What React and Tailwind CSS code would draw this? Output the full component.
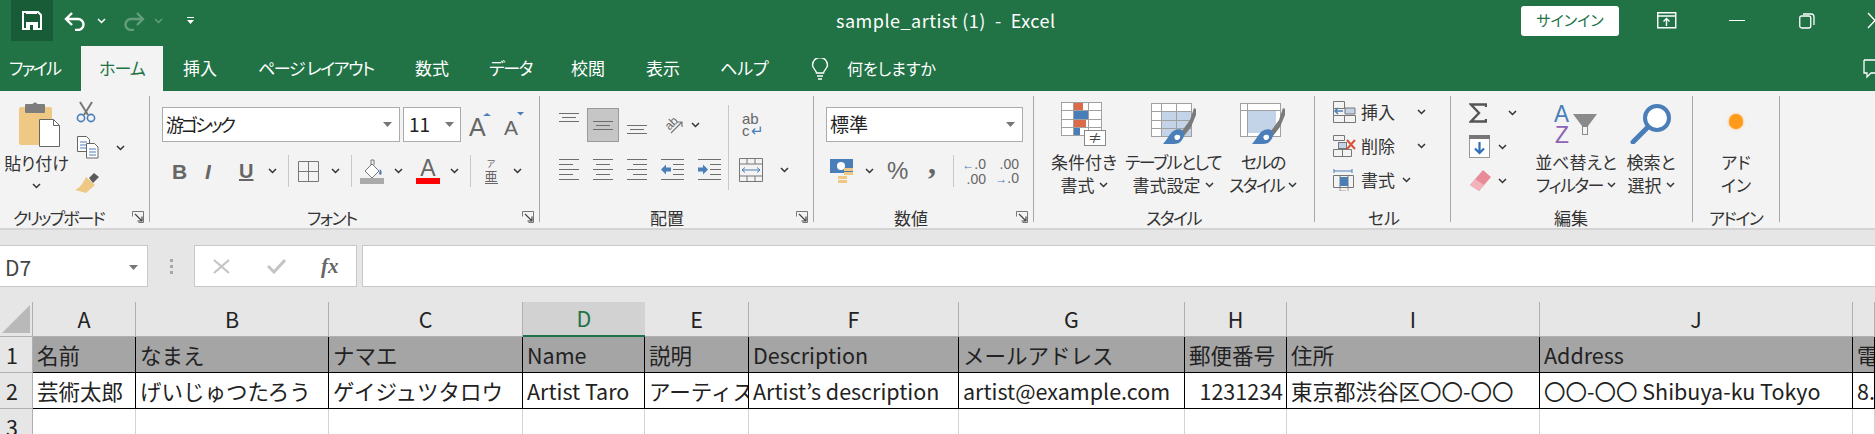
import React from "react";

const Chev = ({ className = "", color = "#333" }) => (
  <svg width="9" height="6" viewBox="0 0 9 6" className={`shrink-0 ${className}`}>
    <path d="M1 1l3.5 3.5L8 1" fill="none" stroke={color} strokeWidth="1.5" />
  </svg>
);

const Arrow = ({ className = "" }) => (
  <svg width="9" height="5" viewBox="0 0 9 5" className={`shrink-0 ${className}`}>
    <path d="M0 0h9L4.5 5z" fill="#777" />
  </svg>
);

const Sep = ({ className = "" }) => <div className={`w-px h-[32px] bg-[#c8c8c8] shrink-0 ${className}`} />;

const Launcher = ({ className = "" }) => (
  <svg width="12" height="12" viewBox="0 0 12 12" className={`shrink-0 ${className}`}>
    <path d="M.5 5.5V.5h11v11h-5" fill="none" stroke="#777" />
    <path d="M3 3l7 7M10 5.5V10H5.5" fill="none" stroke="#444" strokeWidth="1.2" />
  </svg>
);

const GroupLabel = ({ children, className = "", launcher = false }) => (
  <div className="flex items-center h-[16px] mb-[-3px] text-[17px] leading-none text-[#333] whitespace-nowrap [font-feature-settings:'palt']">
    <span className={className}>{children}</span>
    {launcher && <Launcher className="ml-auto mr-[5px]" />}
  </div>
);

const Lines = ({ rows, w = 20, h = 10, color = "#6e6e6e", className = "" }) => (
  <svg width={w} height={h} viewBox={`0 0 ${w} ${h}`} className={`shrink-0 ${className}`}>
    {rows.map((r, i) => (
      <rect key={i} x={r[0]} y={r[2]} width={r[1] - r[0]} height="1" fill={color} />
    ))}
  </svg>
);

const TopLines = [[0, 20, 0], [3, 17, 4], [0, 20, 8]];
const LeftLines = [[0, 20, 0], [0, 14, 5], [0, 20, 10], [0, 14, 15], [0, 20, 20]];
const CenterLines = [[0, 20, 0], [3, 17, 5], [0, 20, 10], [3, 17, 15], [0, 20, 20]];
const RightLines = [[0, 20, 0], [6, 20, 5], [0, 20, 10], [6, 20, 15], [0, 20, 20]];

const Indent = ({ flip }) => (
  <svg width="23" height="21" viewBox="0 0 23 21" className="shrink-0">
    <g fill="#6e6e6e">
      <rect x="0" y="0" width="23" height="1" />
      <rect x="0" y="20" width="23" height="1" />
      <rect x="12" y="5" width="11" height="1" />
      <rect x="12" y="10" width="11" height="1" />
      <rect x="12" y="15" width="11" height="1" />
    </g>
    {flip ? (
      <path d="M0 10.5l5-5v3h5v4H5v3z" fill="#4a7eb8" />
    ) : (
      <path d="M10 10.5l-5-5v3H0v4h5v3z" fill="#4a7eb8" />
    )}
  </svg>
);

const BrushIcon = () => (
  <>
    <path d="M30 28l8-11 4-12 2 1v6l-5 12-7 9z" fill="#7a7a7a" />
    <path d="M22 41h-11c3-3 6-9 9-12 3-3 9-4 11-1 2 3 1 6-1 9-2 3-5 4-8 4z" fill="#4a7eb8" />
    <path d="M24 32c2-1 5 0 4 3-1 2-4 3-5 1-1-2-1-3 1-4z" fill="#fff" />
  </>
);

const GridLines = ({ x, y, w, h, cols, rows }) => (
  <g stroke="#a0a0a0" strokeWidth="1" fill="none">
    <rect x={x + 0.5} y={y + 0.5} width={w} height={h} />
    {cols.map((c) => <path key={c} d={`M${x + c + 0.5} ${y}v${h}`} />)}
    {rows.map((r) => <path key={r} d={`M${x} ${y + r + 0.5}h${w}`} />)}
  </g>
);

const CondIcon = () => (
  <svg width="46" height="45" viewBox="0 0 46 45">
    <rect x="0" y="0" width="40" height="33" fill="#fff" />
    <rect x="12" y="1" width="10" height="7" fill="#dc6a4a" />
    <rect x="12" y="9" width="15" height="8" fill="#4a7eb8" />
    <rect x="12" y="18" width="13" height="7" fill="#dc6a4a" />
    <rect x="12" y="26" width="7" height="7" fill="#4a7eb8" />
    <GridLines x={0} y={0} w={40} h={33} cols={[12, 27]} rows={[8, 17, 25]} />
    <rect x="23.5" y="28.5" width="21" height="15" fill="#fff" stroke="#8a8a8a" />
    <text x="34" y="41" textAnchor="middle" fontSize="14" fill="#444">≠</text>
  </svg>
);

const TableIcon = () => (
  <svg width="45" height="42" viewBox="0 0 45 42">
    <rect x="0" y="0" width="40" height="33" fill="#fff" />
    <rect x="10" y="8" width="30" height="25" fill="#c3d4e8" />
    <GridLines x={0} y={0} w={40} h={33} cols={[10, 25]} rows={[8, 17, 25]} />
    <g transform="translate(1 0)"><BrushIcon /></g>
  </svg>
);

const CellStyleIcon = () => (
  <svg width="46" height="42" viewBox="0 0 46 42">
    <rect x="0.5" y="0.5" width="40" height="33" fill="#fff" stroke="#a0a0a0" />
    <path d="M0 7.5h40M7.5 0v33" stroke="#a0a0a0" />
    <rect x="8" y="8" width="28" height="22" fill="#c3d4e8" />
    <g transform="translate(1 0)"><BrushIcon /></g>
  </svg>
);

const SortIcon = () => (
  <svg width="44" height="40" viewBox="0 0 44 40">
    <text x="0" y="18" fontSize="24" fill="#4a7eb8" fontFamily="Liberation Sans, sans-serif" textLength="15" lengthAdjust="spacingAndGlyphs">A</text>
    <text x="1" y="39" fontSize="24" fill="#8e62b4" fontFamily="Liberation Sans, sans-serif" textLength="14" lengthAdjust="spacingAndGlyphs">Z</text>
    <path d="M19 10h24l-9 12v9h-6v-9z" fill="#8a8a8a" />
    <path d="M29 23h4v7h-4z" fill="#f3f3f3" />
  </svg>
);

const FindIcon = () => (
  <svg width="42" height="40" viewBox="0 0 42 40">
    <ellipse cx="27" cy="14" rx="12" ry="12" fill="#fff" stroke="#4a7eb8" strokeWidth="4" />
    <path d="M17 24L3 38" stroke="#4a7eb8" strokeWidth="5" strokeLinecap="round" />
  </svg>
);

const SmallGrid = ({ children }) => (
  <svg width="23" height="22" viewBox="0 0 23 22" className="shrink-0 ml-[18px]">
    {children}
  </svg>
);

const BigButton = ({ icon, lines, className = "" }) => (
  <div className={`flex flex-col items-center shrink-0 text-[#333] text-[17px] [font-feature-settings:'palt'] ${className}`}>
    <div className="flex h-[54px] pt-[2px] w-full items-center justify-center">{icon}</div>
    {lines.map((l, i) => (
      <div key={i} className="h-[23px] leading-[23px] whitespace-nowrap flex items-center gap-[4px]">
        {l}
        {i === 1 && <Chev />}
      </div>
    ))}
  </div>
);

const Kana = ({ children }) => <span className="tracking-[-1.5px]">{children}</span>;

const CellRow = ({ icon, text, chevClass }) => (
  <div className="flex items-center h-[33px] text-[17px] text-[#333]">
    {icon}
    <span className="ml-[5px]">{text}</span>
    <Chev className={chevClass} />
  </div>
);

const TitleBar = () => (
  <div className="flex items-center h-[41px] text-white [&>*]:shrink-0">
    <div className="flex items-center justify-center ml-[11px] w-[42px] h-[41px] bg-[#185c37]">
      <svg width="20" height="19" viewBox="0 0 20 19">
        <path d="M1 1h15l3 3v14H1z" fill="none" stroke="#fff" strokeWidth="2" />
        <path d="M4 11h12v8H4z" fill="#fff" />
        <path d="M8 14h3v5H8z" fill="#185c37" />
        <path d="M4 1h11v2H4z" fill="#fff" />
      </svg>
    </div>
    <svg width="23" height="20" viewBox="0 0 23 20" className="ml-[11px]">
      <path d="M8 2L2 8l6 6M2 8h12a5.5 5.5 0 0 1 0 11h-3" fill="none" stroke="#fff" strokeWidth="2.4" />
    </svg>
    <Chev color="#fff" className="ml-[10px]" />
    <svg width="23" height="20" viewBox="0 0 23 20" className="ml-[16px] opacity-30">
      <path d="M15 2l6 6-6 6M21 8H9a5.5 5.5 0 0 0 0 11h3" fill="none" stroke="#fff" strokeWidth="2.4" />
    </svg>
    <Chev color="#fff" className="ml-[9px] opacity-30" />
    <svg width="7" height="8" viewBox="0 0 7 8" className="ml-[24px]">
      <path d="M0 0h7v1H0zM0 3h7L3.5 7z" fill="#fff" />
    </svg>
    <div className="ml-[642px] w-[230px] text-[18px] whitespace-pre tracking-[0.5px]">sample_artist (1)  -  Excel</div>
    <button className="ml-[455px] w-[98px] h-[30px] rounded-[3px] bg-white text-[#217346] text-[15px] [font-feature-settings:'palt']">サインイン</button>
    <svg width="20" height="17" viewBox="0 0 20 17" className="ml-[38px]">
      <path d="M.75.75h18v15h-18zM0 4h19" fill="none" stroke="#fff" strokeWidth="1.4" />
      <path d="M9.5 14V7M6.5 9.5l3-3 3 3" fill="none" stroke="#fff" strokeWidth="1.4" />
    </svg>
    <div className="ml-[52px] w-[16px] h-[1.5px] bg-white" />
    <svg width="16" height="17" viewBox="0 0 16 17" className="ml-[54px]">
      <rect x=".75" y="4" width="11" height="12" rx="2" fill="none" stroke="#fff" strokeWidth="1.3" />
      <path d="M4 2h8a3 3 0 0 1 3 3v8" fill="none" stroke="#fff" strokeWidth="1.3" />
    </svg>
    <svg width="16" height="17" viewBox="0 0 16 17" className="ml-[52px]">
      <path d="M1 1l14 15M15 1L1 16" stroke="#fff" strokeWidth="1.3" />
    </svg>
  </div>
);

const TabBar = () => (
  <div className="flex items-stretch h-[45px] mt-[5px] pl-[9px] text-white text-[17px] whitespace-nowrap [font-feature-settings:'palt']">
    <div className="flex items-center w-[72px] pb-[1px] tracking-[-2px]">ファイル</div>
    <div className="flex items-center justify-center w-[82px] bg-[#f3f3f3] text-[#217346] pb-[1px] tracking-[-1px]">ホーム</div>
    <div className="flex items-center ml-[20px] w-[75px] pb-[1px]">挿入</div>
    <div className="flex items-center w-[157px] pb-[1px] tracking-[-1.4px]">ページ レイアウト</div>
    <div className="flex items-center w-[74px] pb-[1px]">数式</div>
    <div className="flex items-center w-[82px] pb-[1px] tracking-[-1.5px]">データ</div>
    <div className="flex items-center w-[75px] pb-[1px]">校閲</div>
    <div className="flex items-center w-[74px] pb-[1px]">表示</div>
    <div className="flex items-center w-[91px] pb-[1px]">ヘルプ</div>
    <svg width="18" height="22" viewBox="0 0 18 22" className="self-center">
      <path d="M5.5 15c0-3-4-4-4-8a7.5 7.5 0 0 1 15 0c0 4-4 5-4 8zM6 18h6M7 21h4" fill="none" stroke="#fff" strokeWidth="1.4" />
    </svg>
    <div className="flex items-center ml-[18px] text-[16px] pb-[1px]">何をしますか</div>
    <svg width="12" height="20" viewBox="0 0 12 20" className="ml-auto self-center">
      <path d="M1 1h11M1 1v13h3v4l4-4h4" fill="none" stroke="#fff" strokeWidth="1.3" />
    </svg>
  </div>
);

const ClipboardGroup = () => (
  <div className="flex flex-col w-[150px] h-[126px] border-r border-[#a8a8a8] justify-between">
    <div className="flex">
      <div className="flex flex-col items-center ml-[6px] w-[61px] text-[17px] text-[#333]">
        <svg width="41" height="45" viewBox="0 0 41 45" className="mt-[6px] ml-[6px]">
          <rect x="0" y="5" width="33" height="38" rx="2" fill="#efc884" />
          <rect x="6" y="2" width="20" height="9" rx="1" fill="#7d7d7d" />
          <circle cx="16" cy="3" r="2.5" fill="#7d7d7d" />
          <path d="M20.5 17.5h14l6 6v21h-20z" fill="#fff" stroke="#666" />
          <path d="M34.5 17.5v6h6" fill="none" stroke="#666" />
        </svg>
        <div className="mt-[5px] leading-[22px] whitespace-nowrap [font-feature-settings:'palt']">貼り付け</div>
        <Chev className="mt-[9px]" />
      </div>
      <div className="flex flex-col ml-[8px]">
        <svg width="22" height="22" viewBox="0 0 22 22" className="mt-[5px]">
          <path d="M5 1l8 13M17 1L9 14" stroke="#777" strokeWidth="2" />
          <circle cx="6" cy="17" r="3.6" fill="none" stroke="#4a7eb8" strokeWidth="1.6" />
          <circle cx="16" cy="17" r="3.6" fill="none" stroke="#4a7eb8" strokeWidth="1.6" />
        </svg>
        <div className="flex items-center mt-[13px]">
          <svg width="22" height="23" viewBox="0 0 22 23" className="ml-[2px]">
            <path d="M.5.5h9l3 3v12H.5z" fill="#fff" stroke="#666" />
            <path d="M3 6h7M3 9h7M3 12h7" stroke="#4a7eb8" />
            <path d="M9.5 7.5h8l3.5 3.5v11H9.5z" fill="#fff" stroke="#666" />
            <path d="M12 13h7M12 16h7M12 19h7" stroke="#4a7eb8" />
          </svg>
          <Chev className="ml-[17px]" />
        </div>
        <svg width="24" height="20" viewBox="0 0 24 20" className="mt-[14px]">
          <path d="M14 5l5-5 5 4-6 6z" fill="#5a5a5a" />
          <path d="M11 4l9 8-9 8-11-3c5-2 8-7 11-13z" fill="#efc884" />
        </svg>
      </div>
    </div>
    <GroupLabel launcher className="ml-[13px] tracking-[-2px]">クリップボード</GroupLabel>
  </div>
);

const FontGroup = () => (
  <div className="flex flex-col w-[390px] h-[126px] border-r border-[#a8a8a8] justify-between">
    <div className="flex flex-col">
      <div className="flex items-center mt-[11px] ml-[12px] h-[35px]">
        <div className="flex items-center w-[238px] h-[35px] bg-white border border-[#ababab] pl-[3px] pr-[7px] text-[#222] justify-between">
          <span className="text-[18px] tracking-[-3px] [font-feature-settings:'palt']">游ゴシック</span>
          <Arrow />
        </div>
        <div className="flex items-center w-[58px] h-[35px] ml-[3px] bg-white border border-[#ababab] pl-[5px] pr-[6px] text-[19px] text-[#222] justify-between">
          11<Arrow />
        </div>
        <svg width="24" height="26" viewBox="0 0 24 26" className="ml-[6px] shrink-0">
          <text x="2" y="24" fontSize="25" fill="#666" fontFamily="Liberation Sans, sans-serif">A</text>
          <path d="M16 4l4-3 4 3z" fill="#4a7eb8" />
        </svg>
        <svg width="20" height="24" viewBox="0 0 20 24" className="ml-[13px] mt-[-2px] shrink-0">
          <text x="0" y="23" fontSize="21" fill="#666" fontFamily="Liberation Sans, sans-serif">A</text>
          <path d="M13 0h7l-3.5 3.5z" fill="#4a7eb8" />
        </svg>
      </div>
      <div className="flex items-center mt-[13px] h-[32px] text-[#666] [font-family:'Liberation_Sans',sans-serif]">
        <span className="ml-[22px] w-[12px] font-bold text-[21px] leading-none">B</span>
        <span className="ml-[21px] w-[11px] italic font-bold text-[21px] leading-none">I</span>
        <span className="ml-[23px] w-[13px] text-[20px] leading-none underline font-bold">U</span>
        <Chev className="ml-[16px]" />
        <Sep className="ml-[11px]" />
        <svg width="21" height="21" viewBox="0 0 21 21" className="ml-[9px]">
          <path d="M.5.5h20v20H.5zM10.5 0v21M0 10.5h21" fill="none" stroke="#777" />
        </svg>
        <Chev className="ml-[12px]" />
        <Sep className="ml-[11px]" />
        <svg width="24" height="25" viewBox="0 0 24 25" className="ml-[8px]">
          <path d="M5 12l7-7 7 7-7 7z" fill="#fff" stroke="#777" />
          <path d="M11 6V1h3v5" fill="none" stroke="#777" />
          <path d="M20 10c2 2 2 4 1 6l-2-1z" fill="#4a7eb8" />
          <rect x="0" y="19" width="24" height="6" fill="#aaa" />
        </svg>
        <Chev className="ml-[10px]" />
        <div className="flex flex-col items-center ml-[13px] w-[24px] leading-none">
          <span className="text-[23px] leading-[19px] text-[#666]">A</span>
          <div className="w-[24px] h-[6px] bg-[#ff0000]" />
        </div>
        <Chev className="ml-[10px]" />
        <Sep className="ml-[11px]" />
        <div className="flex flex-col items-center ml-[14px] w-[12px] [font-family:'Noto_Sans_CJK_JP',sans-serif]">
          <span className="text-[9px] leading-[10px]">ア</span>
          <span className="text-[13px] leading-[14px] border-b border-[#666]">亜</span>
        </div>
        <Chev className="ml-[16px]" />
      </div>
    </div>
    <GroupLabel launcher className="ml-[157px] tracking-[-1.5px]">フォント</GroupLabel>
  </div>
);

const AlignGroup = () => (
  <div className="flex flex-col w-[274px] h-[126px] border-r border-[#a8a8a8] justify-between">
    <div className="flex">
      <div className="flex flex-col ml-[19px] mt-[12px]">
        <div className="flex h-[34px]">
          <Lines rows={TopLines} className="mt-[5px]" h={9} />
          <div className="flex items-center justify-center w-[32px] h-[34px] ml-[8px] bg-[#c6c6c6] border border-[#9a9a9a]">
            <Lines rows={TopLines} h={9} />
          </div>
          <Lines rows={TopLines} className="ml-[8px] mt-[17px]" h={9} />
          <svg width="21" height="19" viewBox="0 0 21 19" className="ml-[16px] mt-[7px]">
            <text x="9" y="12" fontSize="12" fill="#666" textAnchor="middle" transform="rotate(-45 9 9)" fontFamily="Liberation Sans, sans-serif">ab</text>
            <path d="M8 18L19 7M14 7h5v5" fill="none" stroke="#777" strokeWidth="1.2" />
          </svg>
          <Chev className="ml-[7px] mt-[14px]" />
        </div>
        <div className="flex mt-[17px] gap-[14px]">
          <Lines rows={LeftLines} h={21} />
          <Lines rows={CenterLines} h={21} />
          <Lines rows={RightLines} h={21} />
          <Indent flip />
          <Indent />
        </div>
      </div>
      <div className="w-px h-[85px] mt-[9px] ml-[7px] bg-[#c8c8c8]" />
      <div className="flex flex-col ml-[10px]">
        <div className="flex flex-col mt-[17px] ml-[3px] w-[20px] h-[24px] text-[15px] leading-[12px] text-[#666] [font-family:'Liberation_Sans',sans-serif]">
          <span>ab</span>
          <span>c<span className="text-[#4a7eb8] ml-[1px]">↵</span></span>
        </div>
        <div className="flex items-center mt-[21px]">
          <svg width="24" height="24" viewBox="0 0 24 24">
            <path d="M.5.5h23v23H.5zM0 6h24M0 18h24M8 0v6M16 0v6M8 18v6M16 18v6" fill="none" stroke="#777" />
            <path d="M3 12h18M6 9.5L3 12l3 2.5M18 9.5l3 2.5-3 2.5" fill="none" stroke="#4a7eb8" />
          </svg>
          <Chev className="ml-[17px]" />
        </div>
      </div>
    </div>
    <GroupLabel launcher className="ml-[110px]">配置</GroupLabel>
  </div>
);

const NumberGroup = () => (
  <div className="flex flex-col w-[220px] h-[126px] border-r border-[#a8a8a8] justify-between">
    <div className="flex flex-col">
      <div className="flex items-center mt-[11px] ml-[12px] w-[197px] h-[35px] bg-white border border-[#ababab] pl-[3px] pr-[7px] justify-between text-[19px] text-[#222]">
        標準<Arrow />
      </div>
      <div className="flex items-center mt-[13px] h-[32px] text-[#666] [font-family:'Liberation_Sans',sans-serif]">
        <svg width="24" height="24" viewBox="0 0 24 24" className="ml-[16px]">
          <rect x="0" y="0" width="23" height="14" fill="#4a7eb8" />
          <circle cx="11" cy="7" r="4" fill="#fff" />
          <g fill="#efc884">
            <rect x="14" y="9" width="9" height="3" />
            <rect x="14" y="13" width="9" height="3" />
            <rect x="8" y="17" width="9" height="3" />
            <rect x="8" y="21" width="9" height="3" />
          </g>
        </svg>
        <Chev className="ml-[11px]" />
        <span className="ml-[13px] w-[21px] text-[24px] leading-none">%</span>
        <span className="ml-[20px] w-[9px] font-bold text-[32px] leading-none mt-[-16px] [font-family:'Liberation_Serif',serif]">,</span>
        <Sep className="ml-[16px]" />
        <div className="flex flex-col items-end ml-[9px] w-[23px] text-[14px] leading-[14px] whitespace-nowrap">
          <span><span className="text-[#4a7eb8] font-bold text-[12px]">←</span>.0</span>
          <span>.00</span>
        </div>
        <div className="flex flex-col items-end ml-[10px] w-[23px] text-[14px] leading-[14px] whitespace-nowrap">
          <span>.00</span>
          <span><span className="text-[#4a7eb8] font-bold text-[12px]">→</span>.0</span>
        </div>
      </div>
    </div>
    <GroupLabel launcher className="ml-[80px]">数値</GroupLabel>
  </div>
);

const StyleGroup = () => (
  <div className="flex flex-col w-[281px] h-[126px] border-r border-[#a8a8a8] justify-between">
    <div className="flex pl-[10px]">
      <BigButton className="w-[80px]" icon={<CondIcon />} lines={["条件付き", "書式"]} />
      <BigButton className="w-[98px]" icon={<TableIcon />} lines={[<Kana key="a">テーブルとして</Kana>, "書式設定"]} />
      <BigButton className="w-[82px]" icon={<CellStyleIcon />} lines={[<Kana key="a">セルの</Kana>, <Kana key="b">スタイル</Kana>]} />
    </div>
    <GroupLabel className="ml-[112px] tracking-[-1.5px]">スタイル</GroupLabel>
  </div>
);

const CellsGroup = () => (
  <div className="flex flex-col w-[136px] h-[126px] border-r border-[#a8a8a8] justify-between">
    <div className="flex flex-col gap-[1px] mt-[-1px] [font-feature-settings:'palt']">
      <CellRow
        text="挿入"
        chevClass="ml-[22px]"
        icon={
          <SmallGrid>
            <path d="M.5 .5h11v7H.5zM.5 14.5h22v7H.5zM11.5 14v8M.5 7.5v7" fill="none" stroke="#777" />
            <path d="M12 7h10v6H12z" fill="#c3d4e8" stroke="#777" />
            <path d="M10 10H2M5 7l-3 3 3 3" fill="none" stroke="#4a7eb8" strokeWidth="1.5" />
          </SmallGrid>
        }
      />
      <CellRow
        text="削除"
        chevClass="ml-[22px]"
        icon={
          <SmallGrid>
            <path d="M.5 .5h11v5H.5zM.5 14.5h18v7H.5zM9.5 14v8" fill="none" stroke="#777" />
            <rect x="5.5" y="7.5" width="8" height="6" fill="#c3d4e8" stroke="#777" />
            <path d="M14 5l8 9M22 5l-8 9" stroke="#d8533a" strokeWidth="2" />
          </SmallGrid>
        }
      />
      <CellRow
        text="書式"
        chevClass="ml-[7px]"
        icon={
          <SmallGrid>
            <path d="M1 2h18M1 0v4M19 0v4" stroke="#4a7eb8" fill="none" />
            <path d="M.5 6.5h20v12H.5zM7 6v13M15 6v13" fill="none" stroke="#777" />
            <rect x="7" y="8" width="8" height="9" fill="#4a7eb8" />
            <path d="M7 19v3h6M15 19v3" fill="none" stroke="#999" />
          </SmallGrid>
        }
      />
    </div>
    <GroupLabel className="ml-[53px]">セル</GroupLabel>
  </div>
);

const EditGroup = () => (
  <div className="flex flex-col w-[242px] h-[126px] border-r border-[#a8a8a8] justify-between">
    <div className="flex">
      <div className="flex flex-col gap-[1px] w-[82px] pl-[18px]">
        <div className="flex items-center h-[33px]">
          <svg width="18" height="20" viewBox="0 0 18 20">
            <path d="M17 4V1.5H2l8 8.5-8 8.5h15V16" fill="none" stroke="#555" strokeWidth="2.4" />
          </svg>
          <Chev className="ml-[21px]" />
        </div>
        <div className="flex items-center h-[33px]">
          <svg width="21" height="23" viewBox="0 0 21 23">
            <rect x=".5" y=".5" width="20" height="22" fill="#fff" stroke="#999" />
            <rect x="0" y="0" width="21" height="4" fill="#777" />
            <path d="M10.5 7v11M6 13.5l4.5 4.5 4.5-4.5" fill="none" stroke="#2f6fb8" strokeWidth="2.2" />
          </svg>
          <Chev className="ml-[8px]" />
        </div>
        <div className="flex items-center h-[33px]">
          <svg width="22" height="21" viewBox="0 0 22 21">
            <path d="M14 0l8 7-12 14-9-6z" fill="#e98a99" />
            <path d="M1 15l5-6 9 6-5 6z" fill="#f3b3bd" />
          </svg>
          <Chev className="ml-[7px]" />
        </div>
      </div>
      <BigButton className="w-[86px]" icon={<SortIcon />} lines={["並べ替えと", <Kana key="b">フィルター</Kana>]} />
      <BigButton className="w-[64px]" icon={<FindIcon />} lines={["検索と", "選択"]} />
    </div>
    <GroupLabel className="ml-[103px]">編集</GroupLabel>
  </div>
);

const AddinGroup = () => (
  <div className="flex flex-col w-[87px] h-[126px] border-r border-[#a8a8a8] justify-between">
    <div className="flex flex-col items-center text-[17px] text-[#333] [font-feature-settings:'palt']">
      <div className="flex items-center justify-center h-[50px] mb-[4px]">
        <div className="w-[14px] h-[15px] rounded-full bg-[#ff9a1a] shadow-[0_0_3px_#ffb45c]" />
      </div>
      <div className="h-[23px] leading-[23px]">アド</div>
      <div className="h-[23px] leading-[23px]">イン</div>
    </div>
    <GroupLabel className="ml-[16px] tracking-[-1.5px]">アドイン</GroupLabel>
  </div>
);

const FormulaBar = () => (
  <div className="flex h-[42px] mt-[15px] mb-[15px]">
    <div className="flex items-center justify-between w-[148px] bg-white border border-l-0 border-[#c8c8c8] pl-[5px] pr-[9px] pt-[3px] text-[21px] text-[#444]">
      D7<Arrow />
    </div>
    <div className="flex flex-col items-center justify-center gap-[3px] w-[46px]">
      <div className="w-[3px] h-[3px] bg-[#a8a8a8]" />
      <div className="w-[3px] h-[3px] bg-[#a8a8a8]" />
      <div className="w-[3px] h-[3px] bg-[#a8a8a8]" />
    </div>
    <div className="flex items-center w-[163px] bg-white border border-[#c8c8c8]">
      <svg width="17" height="15" viewBox="0 0 17 15" className="ml-[18px]">
        <path d="M1 1l15 13M16 1L1 14" stroke="#c4c4c4" strokeWidth="2.2" />
      </svg>
      <svg width="19" height="16" viewBox="0 0 19 16" className="ml-[37px]">
        <path d="M1 8l6 6L18 2" fill="none" stroke="#c4c4c4" strokeWidth="3" />
      </svg>
      <span className="ml-[35px] [font-family:'Liberation_Serif',serif] italic font-bold text-[21px] leading-none text-[#666]">fx</span>
    </div>
    <div className="flex-1 ml-[5px] bg-white border border-r-0 border-[#c8c8c8]" />
  </div>
);

const columns = ["A", "B", "C", "D", "E", "F", "G", "H", "I", "J", ""];
const row1 = ["名前", "なまえ", "ナマエ", "Name", "説明", "Description", "メールアドレス", "郵便番号", "住所", "Address", "電話番号"];
const row2 = ["芸術太郎", "げいじゅつたろう", "ゲイジュツタロウ", "Artist Taro", "アーティスト説明", "Artist’s description", "artist@example.com", "1231234", "東京都渋谷区〇〇-〇〇", "〇〇-〇〇 Shibuya-ku Tokyo", "8.1E+09"];

const Sheet = () => (
  <div className="grid grid-cols-[33px_103px_193px_194px_122px_104px_210px_226px_102px_253px_313px_1fr] grid-rows-[35px_36px_36px_25px] text-[21.5px] text-[#222]">
    <div className="flex items-end justify-center bg-[#e6e6e6] border-r border-b border-[#b0b0b0] pb-[3px]">
      <svg width="28" height="28" viewBox="0 0 28 28"><path d="M28 0v28H0z" fill="#b9b9b9" /></svg>
    </div>
    {columns.map((c, i) => (
      <div
        key={i}
        className={
          c === "D"
            ? "flex items-center justify-center bg-[#d2d2d2] border-b-2 border-[#217346] text-[#217346]"
            : "flex items-center justify-center bg-[#e6e6e6] border-r border-b border-[#b0b0b0]"
        }
      >
        {c}
      </div>
    ))}
    <div className="bg-[#e6e6e6] border-r border-b border-[#b0b0b0] pl-[6px] leading-[35px]">1</div>
    {row1.map((t, i) => (
      <div key={i} className="overflow-hidden whitespace-nowrap bg-[#a5a5a5] border-r border-b border-black pl-[4px] leading-[35px]">
        {t}
      </div>
    ))}
    <div className="bg-[#e6e6e6] border-r border-b border-[#b0b0b0] pl-[6px] leading-[35px]">2</div>
    {row2.map((t, i) => (
      <div
        key={i}
        className={
          t === "1231234"
            ? "overflow-hidden whitespace-nowrap bg-white border-r border-b border-black pr-[3px] leading-[35px] text-right"
            : "overflow-hidden whitespace-nowrap bg-white border-r border-b border-black pl-[4px] leading-[35px]"
        }
      >
        {t}
      </div>
    ))}
    <div className="bg-[#e6e6e6] border-r border-[#b0b0b0] pl-[6px] leading-[35px]">3</div>
    {columns.map((c, i) => (
      <div key={i} className="bg-white border-r border-[#d4d4d4]" />
    ))}
  </div>
);

export default function App() {
  return (
    <div className="w-[1875px] h-[434px] overflow-hidden bg-[#e6e6e6] [font-family:'Noto_Sans_CJK_JP','Liberation_Sans',sans-serif]">
      <div className="bg-[#217346] h-[91px] overflow-hidden">
        <TitleBar />
        <TabBar />
      </div>
      <div className="flex h-[139px] pt-[5px] bg-[#f3f3f3] border-b-2 border-[#d4d4d4]">
        <ClipboardGroup />
        <FontGroup />
        <AlignGroup />
        <NumberGroup />
        <StyleGroup />
        <CellsGroup />
        <EditGroup />
        <AddinGroup />
      </div>
      <FormulaBar />
      <Sheet />
    </div>
  );
}
